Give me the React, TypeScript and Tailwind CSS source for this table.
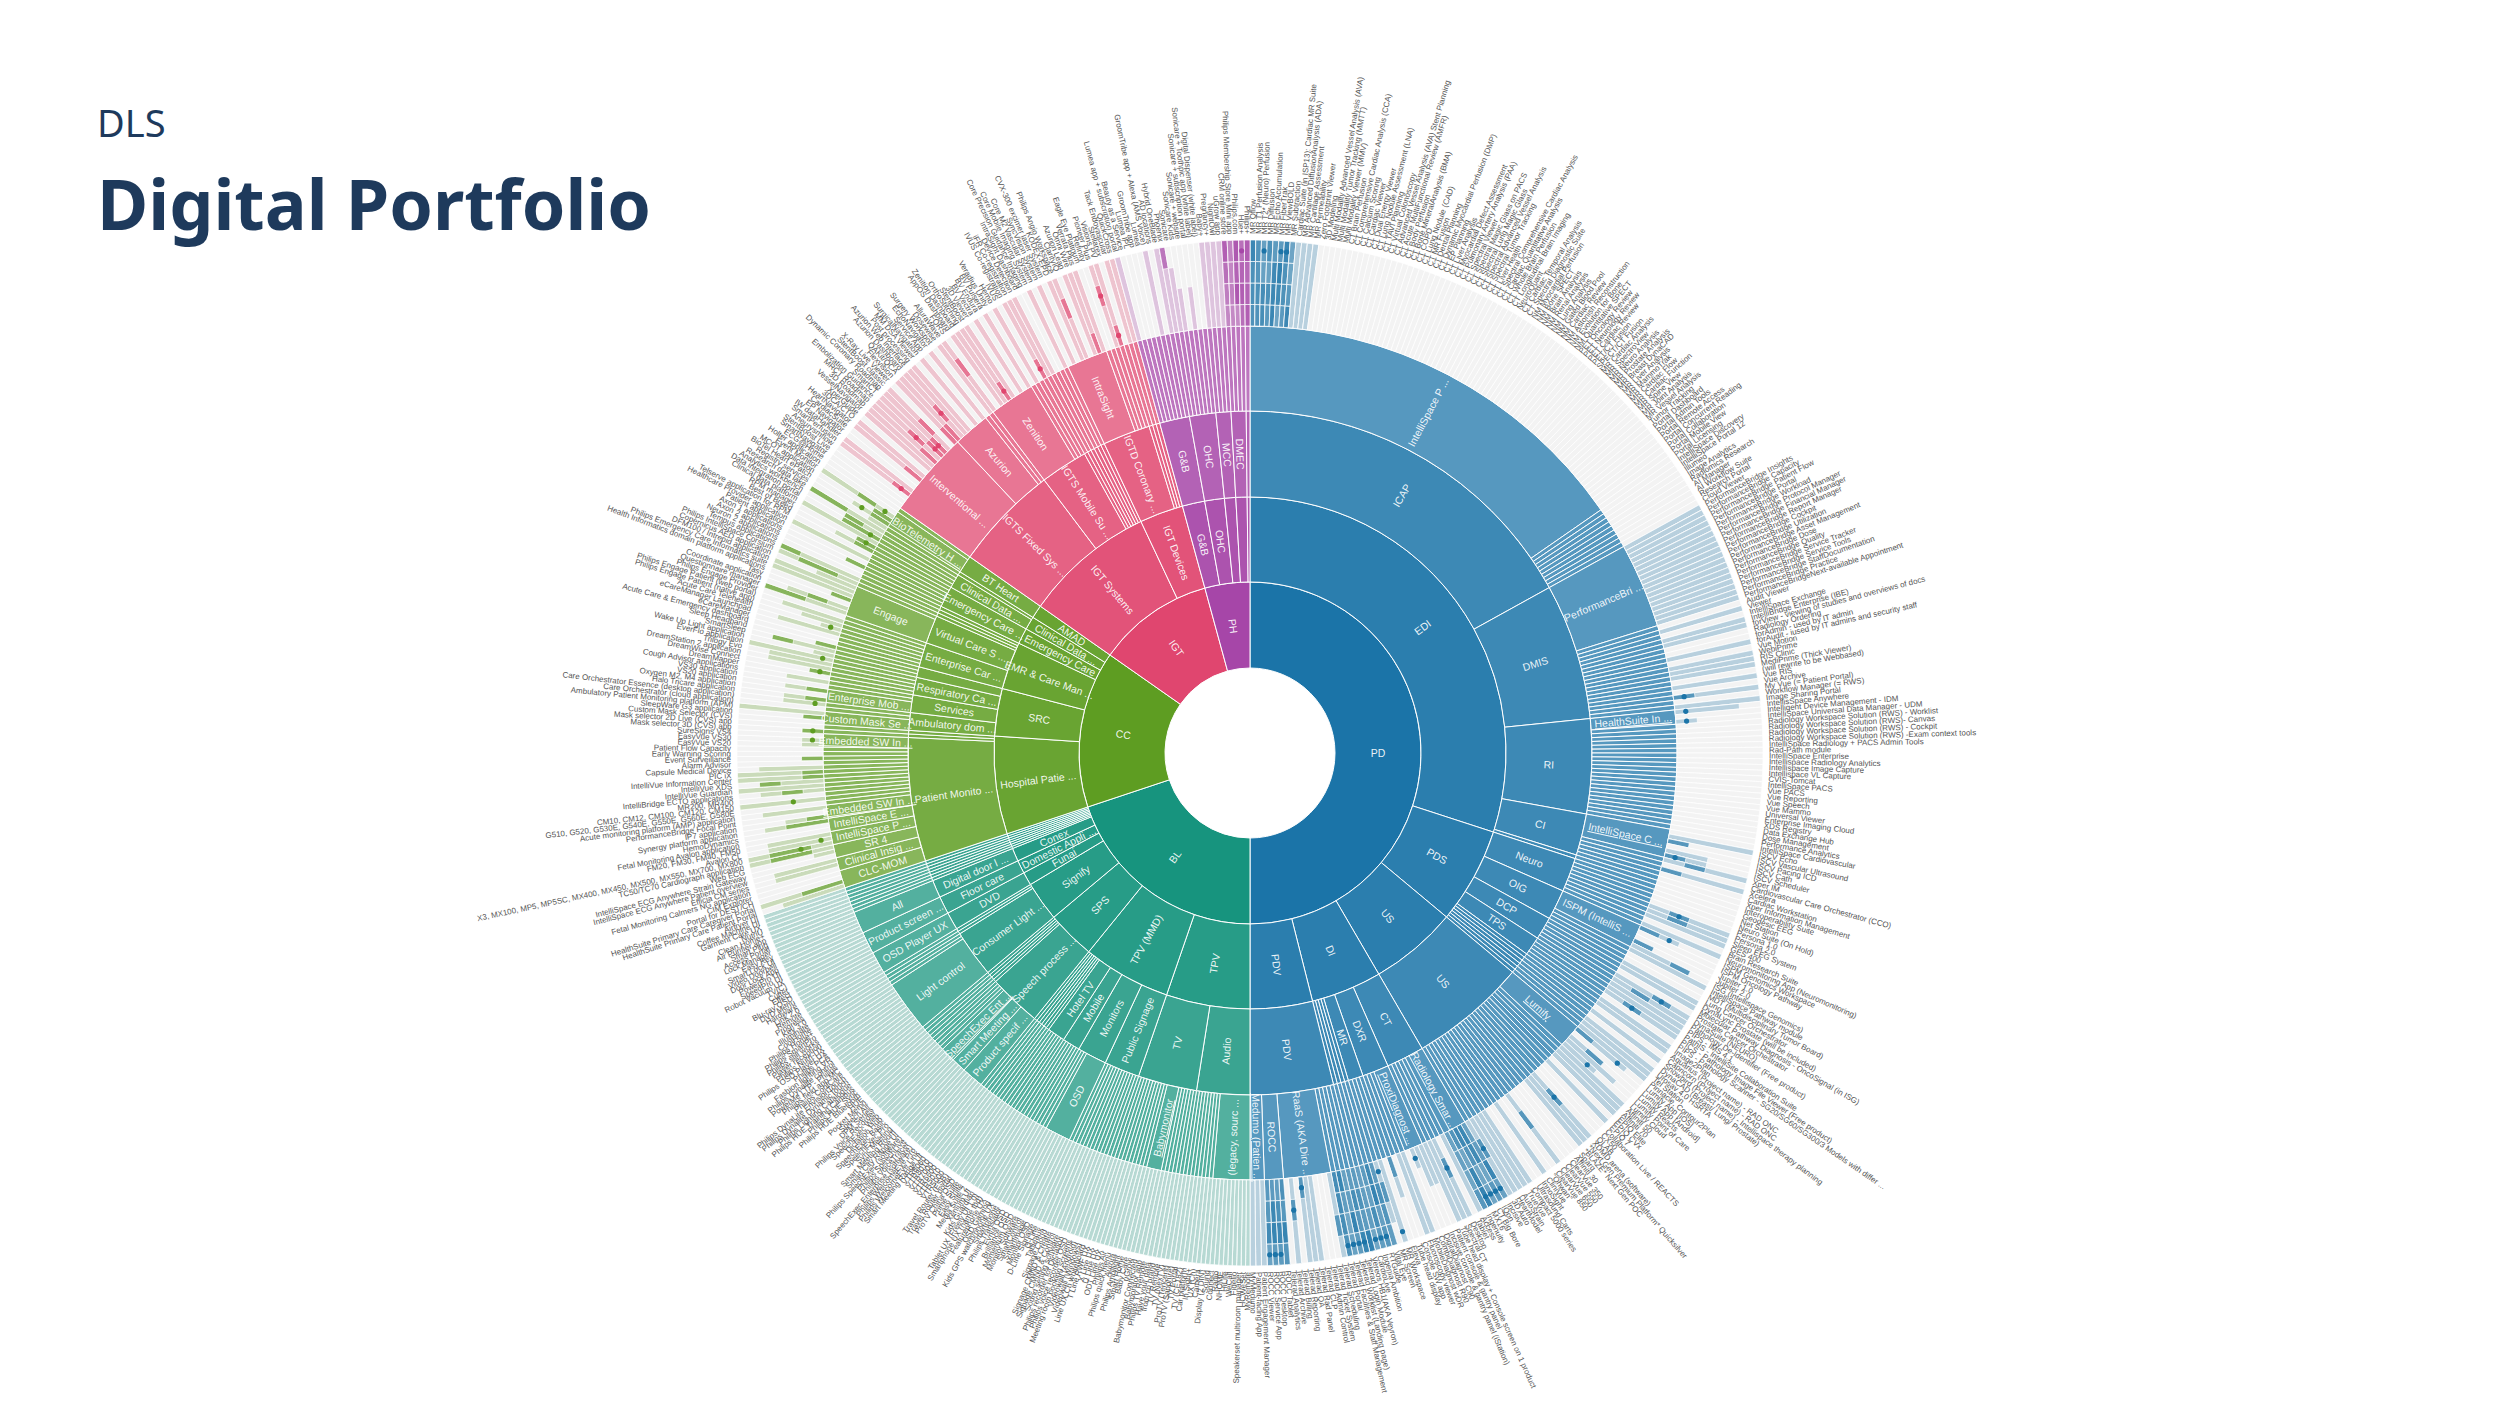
import React from "react";

type Node = { name: string; children?: Node[]; s?: number; u?: boolean };
type Arc = { d: number; a0: number; a1: number; name: string; c: string; u?: boolean };
type Leaf = { a0: number; a1: number; name: string; c: string; s: number };

// leaves from a "|" separated list, s = style of the outer data ring
const L = (list: string, s?: number): Node[] => list.split("|").map((name) => ({ name, s }));
const n = (name: string, children: Node[], o: { s?: number; u?: boolean } = {}): Node => ({ name, children, ...o });

const PD = n("PD", [
  n("EDI", [
    n("ICAP", [
      n("IntelliSpace Portal", [
        ...L("MR Qflow|MR T1 Perfusion Analysis|MR T2* (Neuro) Perfusion|MR Diffusion|MR Echo Accumulation|MR FiberTrak|MR ViewBOLD|MR Subtraction", 3),
        ...L("Cardiac Suite (in ISP13): Cardiac MR Suite|MR Advanced DiffusionAnalysis (ADA)|MR Cartilage Assessment|MR Permeability", 1),
        ...L(
          "Zero Footprint Viewer|3D Modeling|Multi Modality Advanced Vessel Analysis (AVA)|Multi Modality Tumor Tracking (MMTT)|Multi Modality Viewer (MMV)|CT Brain Perfusion|CT Comprehensive Cardiac Analysis (CCA)|CT Calcium Scoring|CT Cardiac Viewer|CT Dual Energy Viewer|CT Lung Nodule Assessment (LNA)|CT TAVI Planning|CT Virtual Colonoscopy|CT Advanced Vessel Analysis (AVA) Stent Planning|CT Acute MultiFunctional Review (AMFR)|CT Body Perfusion|CT Bone MineralAnalysis (BMA)|CT COPD|CT Lung Nodule (CAD)|CT MR Fusion|CT Dental Planning|CT Dynamic Myocardial Perfusion (DMP)|CT EP Planning|CT Liver Analysis|CT Myocardial Defect Assessment|CT Pulmonary Artery Analysis (PAA)|CT Spectral Viewer|CT Spectral Magic Glass on PACS|CT Spectral Lung Magic Glass|CT Spectral Advanced Vessel Analysis|CT Spectral Tumor Tracking|CT Liver Health|CT Spectral Comprehensive Cardiac Analysis|CT Cardiac Quantitative Analysis|CT Whole Brain Perfusion|CT Longitudinal Brain Imaging|NeuroQuant|CT Cardiac Temporal Analysis|CT Spectral Diagnostic Suite|NM Myocardial Perfusion|NM Bone SPECT|NM Brain Analysis|NM Renal Analysis|NM Lung Analysis|NM Gated Blood Pool|NM Cardiac Review|NM Astonish Reconstruction|NM Evolution for Bone|NM Quantitative SPECT|PET Oncology Review|PET Neurology Review|PET Cardiac Review|PET/CT Fusion|SPECT/CT Fusion|MR Cardiac Analysis|MR SpectroView|MR Neuro Analysis|MR Prostate Analysis|MR Breast DynaCAD|MR Liver Analysis|MR MammoTrak|MR Cardiac Flow|MR Cardiac Function|MR Spine View|MR Joint Analysis|MR Vessel Analysis|Tumor Tracking|Portal Dashboard|Portal Admin Tools|Portal Remote Access|Portal Concurrent Reading|Portal Collaboration|Portal Mobile View|Portal Licensing",
          0
        ),
      ]),
      ...L("IntelliSpace Discovery|IntelliSpace Portal 12|Illumeo|Image Analytics|Radiomics Research|AI Manager|AI Workflow Suite|Research Portal|Cloud Viewer", 0),
    ]),
    n("DMIS", [
      n(
        "PerformanceBridge",
        L(
          "PerformanceBridge Insights|PerformanceBridge Capacity|PerformanceBridge Patient Flow|PerformanceBridge Portal|PerformanceBridge Workload|PerformanceBridge Protocol Manager|PerformanceBridge Financial Manager|PerformanceBridge Report Manager|PerformanceBridge Cockpit|PerformanceBridge Utilization|PerformanceBridge Asset Management|PerformanceBridge Dose|PerformanceBridge Quality|PerformanceBridge Service Tracker|PerformanceBridge Service Tools|PerformanceBridge StaffDocumentation|PerformanceBridge Practice|PerformanceBridgeNext-available Appointment",
          1
        )
      ),
      ...L(
        "Audit Viewer|Viewer|IntelliSpace Exchange|IntelliBridge Enterprise (IBE)|forView - viewing of studies and overviews of docs|Radiology Ordering|forAdmin - used by IT admin|forAudit - iused by IT admins and security staff|Vue Motion|WebiPrime|RIS Clinic|MediPrime (Thick Viewer)|(will rewrite to be Webbased)|Vue RIS|Vue Archive|My Vue (= Patient Portal)|Workflow Manager (= RWS)|Image Sharing Portal",
        4
      ),
    ]),
    n("RI", [
      n("HealthSuite Insights", L("IntellisSpace Anywhere|Intelligent Device Management - IDM|IntelliSpace Universal Data Manager - UDM", 2), { u: true }),
      ...L(
        "Radiology Workspace Solution (RWS) - Worklist|Radiology Workspace Solution (RWS)- Canvas|Radiology Workspace Solution (RWS) - Cockpit|Radiology Workspace Solution (RWS) -Exam context tools|IntelliSpace Radiology + PACS Admin Tools|Rad-Path module|IntelliSpace Enterprise|Intellispace Radiology Analytics|Intellispace Image Capture|Intellispace VL Capture|CVIS-Tomcat|IntelliSpace PACS|Vue PACS|Vue Reporting|Vue Speech|Vue Mammo|Universal Viewer|Enterprise Imaging Cloud|XDS Registry|Data Exchange Hub|Dose Management|Performance Analytics",
        0
      ),
    ]),
    n("CI", [
      n("IntelliSpace Cardiovascular", L("IntelliSpace Cardiovascular|ISCV Echo|ISCV Vascular Ultrasound|ISCV Pacing ICD|ISCV Cath|ISCV Scheduler", 2), { u: true }),
      ...L("Xper IM|Cardiovascular Care Orchestrator (CCO)|Xcelera|Cardiac Workstation|Xper Information Management", 4),
    ]),
    ...L("Interoperability Suite", 0),
  ]),
  n("PDS", [
    n("Neuro", L("Geodesic EEG|Net Station|Neuro Suite (On Hold)|Persona 1.0|Persona 2.0|Sleep EEG System|GES 400|Brain Research Suite|Neuromonitoring App (Neuromonitoring)", 4)),
    n("OIG", [
      n("ISPM (IntelliSpace Precision Medicine)", L("ISPM Genomics Workspace|ISPM Oncology Pathway|Jupiter 1.0|Jupiter 2.0|ISG (Intellispace Genomics)", 2)),
      ...L("IntelliSpace Pathway module|MDT (Multidisciplinary Tumor Board)|Lung Cancer Orchestrator", 4),
    ]),
    n("DCP", L("DynaLync Prostate (will be included)|Molecular Pathway Diagnosis - OncoSignal (in ISG)|Prostate Cancer Orchestrator|DynaSuite (NEURO)|Pathology De-Identifier (Free product)|PIPS - IMS 4.1", 4)),
    n("TPS", L("PathIS - IntelliSite Collaboration Suite|PICS - Pathology Image File Viewer (Free product)|PIPS - Pathology Scanner - SG20/SG60/SG300/3 Models with differ ...|Image2Plan|Aquarius (Project name) - RAD ONC", 4)),
    ...L("Capricorn (Project name) - RAD ONC|Snowbird (Project name) - Intellispace therapy planning|DynaCAD (Breast/ Lung/ Prostate)|Urosav 4.0 HSRTA|Tel Station|Pinnacle, Contour2Plan", 4),
  ]),
  n("US", [
    n("US", [
      n("Lumify", L("Lumify App [iOS]|Lumify App [Android]|Lumify Reacts|Lumify Point of Care|Lumify Cloud", 2), { u: true }),
      ...L(
        "Affiniti 50|Affiniti 70|EPIQ Elite|EPIQ CVx|EPIQ 7|Collaboration Live / REACTS|CX50|QLAB|XDMD arena (software)|*Next Gen Premium Platform* Quicksilver|*BLAZE* Next Gen POC|Sparq|Affiniti 30|ClearVue 350|ClearVue 550|ClearVue 650|ClearVue 850|\"Ohwan\"|CliniVue|InnoSight|Ultrasound Carts|Compact 5000 series|TrueVue|AutoStrain|HeartModel|3D Auto",
        4
      ),
    ]),
  ]),
  n("DI", [
    n("CT", [
      n("Radiology Smart Assistant", L("Incisive|IQon|CT Big Bore|MX16|Ingenuity", 3), { u: true }),
      ...L("Access|Tablet|Desktop|Spectral CT|Tube head display + Console screen on 1 product", 4),
    ]),
    n("DXR", [
      n("ProxiDiagnost N90", L("Patient console & gantry panel|Incisive console & gantry panel (iStation)|DigitalDiagnost C90|CombiDiagnost R90", 2), { u: true }),
      ...L("MobileDiagnost wDR|Fluoroscopy viewer|Console SW app", 4),
    ]),
    n("MR", L("Tube head display|Eleva|MR Workspace|MR Screen", 2)),
    ...L("Vital Eye|RTGuide|Ingenia Ambition|CardioLive", 3),
  ]),
  n("PDV", [
    n("PDV", [
      ...L("Vereos HB1(AKA Veyron)|Telerad Login Module|Telerad Worklist (Landing page)|Telerad Facilities & Staff Management|Telerad Portal", 3),
      n("RaaS (AKA Direct Radiology)", L("Telerad Scheduling|Telerad Ticket System|Telerad Admin Control|Telerad CLP|Telerad Rad Panel|Telerad QA|Telerad Reporting|Telerad Billing|Telerad Archive|Telerad Analytics", 4)),
      n("ROCC", L("ROCC Tablet|ROCC Desktop|ROCC Service App|ROCC Viewer", 3)),
      n("Medumo (Patient Navigation)", L("Patient Engagement Manager|Patient-facing App|MyMedumo", 1), { u: true }),
    ]),
  ]),
]);

const BL = n("BL", [
  n("TPV", [
    n("Audio", [
      n("(legacy, sources)", L("MyRemote|HCWeSet|Speakerset multiroom manager|Fidelio|WeCall|HiLife|NHOME|Radio|Connect|Sound")),
      ...L("Display (2 DIN)|Camera|UX (Ch)|In Sight+|Car platform|TV (CE182)|TV Portal|ProTV (Sapphire)"),
    ]),
    n("TV", [
      ...L("ProTV (Tencent)|TV (NexTV)|TV Remote|from co brand|Have your data|Philips TV Remote"),
      n("Babymonitor", L("Babymonitor app|Babymonitor Connected|uGrow|Baby Care"), { u: true }),
      ...L("Smart Home|Philips Ambilight|Aurora|Philips quick menu|Philips Air|ODT Line UX|D Line UX|X Line UX|T Line RWF UX|Line UX Ch whiteboard"),
    ]),
  ]),
  n("TPV (MMD)", [
    n("Public Signage", L("Videowall (Windows)|Videowall (Android)|Meeting room booking screens|Philips voice recorder OSD|Philips recorder for Dictation|Sound setting software|Signage CMND & Control|Signage CMND & Create|Signage Cloud|Tableaux|Q-Line|D-Line Signage")),
    n("Monitors", [n("OSD", L("Monitor OSD|SmartImage|SmartControl|Monitor Software|Momentum OSD|Brilliance OSD|Evnia OSD")), ...L("Philips Translator|Smartphone|Kids GPS watch/phone UX")]),
    n("Mobile", L("OSD Gaming|Featurephone UX|Smartphone UX (name tbd)|Tablet UX (Freely UI 1.0)|Kids Guardian|Xenium UI")),
    n("Hotel TV", L("Media Suite 2|Easy Suite|Prime Suite|ProTV China OSD|Travel Router portal|Travel Router (ESB)")),
    ...L("VTR5000|VTR5010|VTR6600|VTR7000|VTR8010|VTR8060"),
  ]),
  n("SPS", [
    n("Speech processing", [
      n("Product specification", L("Smart Meeting Range UI|Philips WelcomeEye Link|Philips WelcomeEye Pro|SpeechExec Enterprise (software)|Philips VoiceTracer|Philips SpeechLive")),
      n("Smart Meeting Solutions", L("Philips SpeechExec (software)|Smart City Range UI|Smart Meeting Room|Sync Meeting")),
      n("SpeechExec Enterprise", L("SpeechExec Pro|SpeechExec Basic|Dictation Hub|SpeechExec Web"), { u: true }),
      ...L("Philips Voice Recorder|DPM Series|Speech Air|Pocket Memo"),
    ]),
    ...L("HUE|Philips HUE Bluetooth|Philips HUE Sync|Philips HUE Training Campus"),
  ]),
  n("Signify", [
    n("Consumer Lighting", [
      n("Light control", L("Philips Lighting Catalogue|Philips Dynalite DynamicTouch|Philips DynaLite EnvisionTouch|Philips CoolCare|Philips field app MC|PowerMe LTP - Philips|Philips Dynalite control|Fashion lighting VR|Philips PCA|Philips OSD Player UX|Philips Nutri-UX|Player reception|Philips still works|Philips SmartPro")),
      ...L("Philips Home+|CoolHome"),
    ]),
    ...L("Illuminate|Key 3.0"),
  ]),
  n("Funai", [n("DVD", [n("OSD Player UX", L("Progress|Remote|Link 2.0|Hardware|DVD Menu|Blu-ray OSD"))])]),
  n("Domestic Appliances", [n("Floor care", [n("Product screen UX", L("Effect|Cutter|TV(C)|Robot Vacuum UX|SpeedPro UI|PowerPro UI"))])]),
  n("Conex", [n("Digital door lock", [n("All", L("Door Lock App|Video Doorbell|Smart Lock UI|Easy Key|Lock Manager|Access Portal"))])]),
  ...L("Smart Plug|Air Purifier app|Clean Home+|NutriU|Garment Care UX|Coffee Machine UI|Airfryer UI"),
]);

const CC = n("CC", [
  n("Hospital Patient Monitoring", [
    n("Patient Monitoring", [
      n("CLC-MOM", L("HealthSuite Primary Care Patient Portal|HealthSuite Primary Care Caregiver Portal|Portal for DEST/CH|CIM Explorer")),
      n("Clinical Insights", L("Fetal Monitoring Calmers NG application|Efficia CM series|IntelliSpace ECG Anywhere Patient overview")),
      n("SR 4", L("IntelliSpace ECG Anywhere Strain Gateway|Web ECG|TC50/TC70 Cardiograph application")),
      n("IntelliSpace Perinatal", L("X3, MX100, MP5, MP5SC, MX400, MX450, MX500, MX550, MX700, MX800|Avalon CL|FM20, FM30, FM40, FM50")),
      n("IntelliSpace ECG", L("Fetal Monitoring Avalon application|HemoDynamics|Synergy platform application")),
      n("Embedded SW IntelliVue", L("IP7 application|PerformanceBridge Focal Point|Acute monitoring platform (AMP) application"), { u: true }),
      ...L("G510, G520, G530E, G540E, G550E, G560E, G580E|CM10, CM12, CM100, CM120, CM150|MR200, MR400|IntelliBridge ECTO applications|IntelliVue Guardian|IntelliVue XDS|IntelliVue Information Center|PIC iX|Capsule Medical Device|Alarm Advisor|Event Surveillance|Early Warning Scoring|Patient Flow Capacity"),
      n("Embedded SW IntelliVue X3", L("EasyVue VS20|EasyVue VS30|SureSigns VS4"), { u: true }),
    ]),
    ...L("Mask selector 3D (CVS) app|Mask selector 2D Live (CVS) app"),
  ]),
  n("SRC", [
    n("Ambulatory domain", [n("Custom Mask Selector", L("Custom Mask Selector (CVS)|SleepWare G3 application|Ambulatory Patient Monitoring platform (APM)")), ...L("Care Orchestrator (cloud application)|Care Orchestrator Essence (desktop application)")]),
    n("Services", [n("Enterprise Mobility", L("Halo Tricare application|Oxygen M2, M4 application|VS20 application")), ...L("VS30 application|Cough Advisor applications")]),
    n("Respiratory Care", L("DreamMapper|DreamWise Connect|DreamStation 2 application|Trilogy Evo|EverFlo application")),
    n("Sleep", L("Wake Up Light application|SmartSleep|Sleep Headband")),
  ]),
  n("EMR & Care Management", [
    n("Enterprise Care", L("Acute Care & Emergency dashboard|eCareManager|eCareManager Launchpad|Acute Care Telehealth|Philips Engage Patient (native app)|Philips Engage Patient (web portal)|Philips Engage Provider")),
    n("Virtual Care Solutions", [n("Engage", L("Questionnaire manager|Coordinate application|Tasy|Health Informatics domain platform applications|Philips Emergency Care Informatics suite|DFM100 / Intrepid application|Copernicus AED application")), ...L("Philips IntelliSpace Corsium")]),
    ...L("Tempus applications|Neuron 2 applications|Axon 2 applications"),
  ]),
  n("Emergency Care", [n("Emergency Care Informatics", L("Axon 1 applications|Patient application|Healthcare Provider application|Telserve application for RPM|Best of Breed|RPM manager"))]),
  n("Clinical Data Science", [n("Clinical Data Services", L("Clinical data platform|Data integration portal|Analytics workbench|Research data lake")), ...L("Registry services")]),
  n("AMAD", [n("BT Heart", [n("BioTelemetry Heart", L("BioTel Heart ePatch|MCOT application|Event Monitor|Holter application"), { u: true }), ...L("ECG@Home")])]),
]);

const IGT = n("IGT", [
  n("IGT Systems", [
    n("IGTS Fixed Systems", [
      n("Interventional Tools", L("SmartNavigator|StentBoost Live|Aneurysmflow|SmartPerfusion|IW dataHandler|EP Navigator|CardiacSuite|HeartNavigator|3DCA/CTO|XperGuide|VesselNavigator|3D Roadmap|MRCT Roadmap|Embolization Guidance|SmartCT|Dynamic Coronary Roadmap|StentBoost classic|X-Ray Live Viewer|Flexvision")),
      n("Azurion", L("QAKit/QCA|Azurion Dashboard|Azurion Web Interface|Post processing|MM DSA Viewer|SurgicalNavigation|Service App|EchoNavigator")),
      ...L("Surgery Workspot|Dosewise"),
    ]),
    n("IGTS Mobile Surgery", [n("Zenition", L("AlluraWave|FORS|AppOS Dashboard|Zenition Dashboard|OrthoStitching|StentBoost|3D Viewer|BV Vectra|BV Endura|BV Pulsera")), ...L("Veradius Unity|Hemo|IVUS")]),
    ...L("IVUS Co-registration|iFR Co-registration|Device Detection|IntraSight Dashboard|Core Precision Guidance Imaging|Core Mobile Imaging System"),
  ]),
  n("IGT Devices", [
    n("IGTD Coronary Guidance", [n("IntraSight", L("Core M2 Vascular System|SyncVision System|CVX-300 excimer laser System|KODEX-EPD|Philips Angio Workspace|ClarityIQ|Azurion Lean|Omni Wire|Verrata Plus")), ...L("Eagle Eye Platinum|Refinity|Pioneer Plus|Visions PV")]),
    ...L("Stellarex|Tack Endovascular|QuickCross"),
  ]),
]);

const PH = n("PH", [
  n("G&B", [n("G&B", L("Lumea app + subscription portal|Beauty as a Service|Lumea IPL|GroomTribe app|Lumea|GroomTribe app + Alexa (AMS Voice)|AD locations|Hybrid OneBlade"))], { s: 4 }),
  n("OHC", [n("OHC", L("Phoenix|Sonicare|Sonicare Kids|Sonicare + website|Sonicare + subscription portal|Sonicare + Toothpic app (white label)|Digital Dispenser (white label)"))], { s: 2 }),
  n("MCC", [n("MCC", L("Baby+|Pregnancy+|NightOwl|uGrow app"))], { s: 1 }),
  n("DMEC", [n("DMEC", L("CRM online store|Philips Membership Store Mini app|Philips.com|Hue+"))], { s: 3 }),
  ...L("Philips+", 3),
]);

const GROUPS = [
  { node: PD, c: "#1b74a8", a0: 0, a1: 180, s: 0 },
  { node: BL, c: "#17947e", a0: 180, a1: 251.6, s: 1 },
  { node: CC, c: "#5e9d22", a0: 251.6, a1: 305, s: 2 },
  { node: IGT, c: "#e0466f", a0: 305, a1: 344.7, s: 4 },
  { node: PH, c: "#a646a8", a0: 344.7, a1: 360, s: 2 },
];

const R = [85, 171, 256, 342, 427, 513];
const OP = [1, 0.93, 0.85, 0.74];

const rad = (a: number) => (a * Math.PI) / 180;
const pt = (a: number, r: number) => `${(r * Math.sin(rad(a))).toFixed(2)},${(-r * Math.cos(rad(a))).toFixed(2)}`;
const arcPath = (a0: number, a1: number, r0: number, r1: number) => {
  const lg = a1 - a0 > 180 ? 1 : 0;
  return `M${pt(a0, r1)}A${r1},${r1} 0 ${lg} 1 ${pt(a1, r1)}L${pt(a1, r0)}A${r0},${r0} 0 ${lg} 0 ${pt(a0, r0)}Z`;
};

const count = (nd: Node): number => (nd.children && nd.children.length ? nd.children.reduce((t, k) => t + count(k), 0) : 1);

function place(nd: Node, a0: number, a1: number, d: number, c: string, s: number, arcs: Arc[], leaves: Leaf[]) {
  const st = nd.s ?? s;
  if (d === 5) {
    leaves.push({ a0, a1, name: nd.name, c, s: st });
    return;
  }
  arcs.push({ d, a0, a1, name: nd.name, c, u: nd.u });
  // nodes that end early are carried on to the data ring
  const kids = nd.children && nd.children.length ? nd.children : [{ name: nd.name, s: nd.s }];
  const total = kids.reduce((t, k) => t + count(k), 0);
  let a = a0;
  for (const k of kids) {
    const b = a + ((a1 - a0) * count(k)) / total;
    place(k, a, b, d + 1, c, st, arcs, leaves);
    a = b;
  }
}

function mulberry(seed: number) {
  return () => {
    seed |= 0;
    seed = (seed + 0x6d2b79f5) | 0;
    let t = Math.imul(seed ^ (seed >>> 15), 1 | seed);
    t = (t + Math.imul(t ^ (t >>> 7), 61 | t)) ^ t;
    return ((t ^ (t >>> 14)) >>> 0) / 4294967296;
  };
}

const arcs: Arc[] = [];
const leaves: Leaf[] = [];
GROUPS.forEach((g) => place(g.node, g.a0, g.a1, 1, g.c, g.s, arcs, leaves));

type Cell = { d: string; fill: string; op: number };
type Dot = { x: number; y: number; c: string };
const cells: Cell[] = [];
const dots: Dot[] = [];
const rnd = mulberry(11);
const CH = (R[5] - R[4]) / 4;

leaves.forEach((lf) => {
  const { a0, a1, c } = lf;
  const seg = (k0: number, k1: number, fill: string, op: number) => cells.push({ d: arcPath(a0, a1, R[4] + k0 * CH, R[4] + k1 * CH), fill, op });
  const dot = (k: number) => {
    const m = (a0 + a1) / 2;
    const r = R[4] + (k + 0.5) * CH;
    dots.push({ x: r * Math.sin(rad(m)), y: -r * Math.cos(rad(m)), c });
  };
  seg(0, 4, "#f3f3f3", 1);
  const v = rnd();
  if (lf.s === 1) {
    seg(0, 4, c, 0.27);
  } else if (lf.s === 2) {
    if (v > 0.3) {
      const k = 1 + Math.floor(rnd() * 4);
      seg(0, k, c, 0.27);
      if (rnd() < 0.55) {
        const j = Math.floor(rnd() * k);
        seg(j, Math.min(k, j + 1 + Math.floor(rnd() * 2)), c, 0.62);
      }
      if (rnd() < 0.3) dot(Math.floor(rnd() * k));
    }
  } else if (lf.s === 3) {
    for (let k = 0; k < 4; k++) seg(k, k + 1, c, 0.6 + rnd() * 0.3);
    if (rnd() < 0.5) dot(3);
  } else if (lf.s === 4) {
    if (v >= 0.4 && v < 0.84) seg(0, 4, c, 0.27);
    else if (v >= 0.84) {
      seg(0, 4, c, 0.27);
      const j = Math.floor(rnd() * 3);
      seg(j, j + 1, c, 0.62);
      if (rnd() < 0.5) dot(j);
    }
  }
});

const short = (s: string) => (s.length > 14 ? `${s.slice(0, 14)} ...` : s);

const Sunburst = () => (
  <svg width={2500} height={1406} className="col-start-1 row-start-1 font-['Liberation_Sans',Arial,sans-serif]">
    <g transform="translate(1250,753)">
      {arcs.map((a, i) => (
        <path key={`a${i}`} d={arcPath(a.a0, a.a1, R[a.d - 1], R[a.d])} fill={a.c} fillOpacity={OP[a.d - 1]} stroke="#fff" strokeWidth={1} />
      ))}
      {cells.map((c, i) => (
        <path key={`c${i}`} d={c.d} fill={c.fill} fillOpacity={c.op} stroke="#fff" strokeWidth={0.7} />
      ))}
      {dots.map((d, i) => (
        <circle key={`d${i}`} cx={d.x} cy={d.y} r={2.6} fill={d.c} />
      ))}
      {arcs.map((a, i) => {
        const rm = (R[a.d - 1] + R[a.d]) / 2;
        if (rad(a.a1 - a.a0) * rm < 10.5) return null;
        const m = (a.a0 + a.a1) / 2;
        return (
          <text
            key={`t${i}`}
            transform={`rotate(${m - 90}) translate(${rm},0) rotate(${m < 180 ? 0 : 180})`}
            textAnchor="middle"
            dy="0.35em"
            fontSize={10.5}
            fill="#fff"
            fillOpacity={0.92}
            textDecoration={a.u ? "underline" : undefined}
          >
            {short(a.name)}
          </text>
        );
      })}
      {leaves.map((lf, i) => {
        const m = (lf.a0 + lf.a1) / 2;
        const left = m >= 180;
        return (
          <text
            key={`l${i}`}
            transform={`rotate(${m - 90}) translate(519,0)${left ? " rotate(180)" : ""}`}
            textAnchor={left ? "end" : "start"}
            dy="0.32em"
            fontSize={8}
            fill="#555"
          >
            {lf.name}
          </text>
        );
      })}
    </g>
  </svg>
);

export default function App() {
  return (
    <div className="grid w-[2500px] h-[1406px] overflow-hidden bg-white">
      <Sunburst />
      <div className="col-start-1 row-start-1 self-start justify-self-start pl-[97px] pt-[103px] font-['Noto_Sans',sans-serif] text-[#1e3a5c]">
        <div className="text-[38px] leading-none">DLS</div>
        <div className="mt-[27px] text-[70px] font-bold leading-none">Digital Portfolio</div>
      </div>
    </div>
  );
}
